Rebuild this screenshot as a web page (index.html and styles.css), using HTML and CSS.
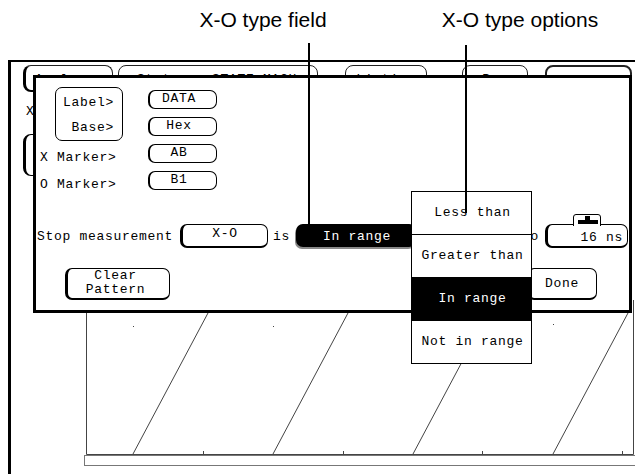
FILE: index.html
```html
<!DOCTYPE html>
<html>
<head>
<meta charset="UTF-8">
<title>X-O type options</title>
<link rel="stylesheet" href="styles.css">
</head>
<body>
<div class="figure">

  <!-- callout captions -->
  <div class="callout callout-field">X-O type field</div>
  <div class="callout callout-options">X-O type options</div>

  <!-- analyzer screen behind the dialog -->
  <div class="frame"></div>
  <div class="tabs">
    <div class="tab tab-a">Analyzer</div>
    <div class="tab tab-b"><span>State</span><span>STATE MACH</span></div>
    <div class="tab tab-c">Listing</div>
    <div class="tab tab-d">Run</div>
    <div class="tab tab-e"><i class="dot"></i></div>
  </div>
  <div class="stub"></div>
  <div class="stub-x">X</div>

  <svg class="waves" width="635" height="474" viewBox="0 0 635 474">
    <g fill="none" stroke="#444" stroke-width="1">
      <path d="M86.5 300 V454.5 H633.5 V300"/>
      <rect x="84.5" y="455.5" width="560" height="10" stroke="#777"/>
      <path d="M133 454 L208 313 M273 454 L348 313 M413 454 L488 313 M553 454 L628 313"/>
      <path d="M203.5 451 V454 M343.5 451 V454 M482.5 451 V454 M622.5 451 V454"/>
    </g>
    <g fill="#444">
      <rect x="133" y="326" width="1" height="1"/>
      <rect x="273" y="326" width="1" height="1"/>
      <rect x="553" y="324" width="1" height="1"/>
    </g>
  </svg>

  <!-- trigger dialog -->
  <div class="dialog">
    <div class="setup">
      <div class="labelbox"><span>Label&gt;</span><span>Base&gt;</span></div>
      <div class="field">DATA</div>
      <div class="field">Hex</div>
      <div class="marker">X Marker&gt;</div>
      <div class="field">AB</div>
      <div class="marker">O Marker&gt;</div>
      <div class="field">B1</div>
    </div>

    <div class="stoprow">
      <span class="words">Stop measurement</span>
      <div class="btn xo">X-O</div>
      <span class="words is">is</span>
      <div class="btn range">In range</div>
      <span class="words to">to</span>
      <div class="btn time">
        <svg class="knob" width="28" height="12" viewBox="0 0 28 12">
          <path d="M0.5 12 V3 Q0.5 0.5 3 0.5 H25 Q27.5 0.5 27.5 3 V12" fill="#fff" stroke="#000"/>
          <rect x="12" y="2" width="5" height="5" fill="#000"/>
          <rect x="5" y="6" width="20" height="4" fill="#000"/>
        </svg>
        16 ns
      </div>
    </div>

    <div class="actions">
      <div class="btn clear">Clear<br>Pattern</div>
      <div class="btn done">Done</div>
    </div>
  </div>

  <!-- open X-O type menu -->
  <ul class="menu">
    <li>Less than</li>
    <li>Greater than</li>
    <li class="picked">In range</li>
    <li>Not in range</li>
  </ul>

  <div class="leader leader-field"></div>
  <div class="leader leader-options"></div>
</div>
</body>
</html>
```

FILE: styles.css
```css
html, body{
  margin:0;
  padding:0;
  background:#fff;
}
body{
  font-family:"Liberation Mono", "DejaVu Sans Mono", monospace;
  font-size:13px;
  letter-spacing:0.7px;
  color:#000;
}
.figure{
  position:relative;
  width:635px;
  height:474px;
  overflow:hidden;
}

/* callouts */
.callout{
  position:absolute;
  top:9px;
  width:200px;
  text-align:center;
  font-family:"Liberation Sans", sans-serif;
  font-size:21px;
  line-height:22px;
  letter-spacing:0;
}
.callout-field{ left:163px; }
.callout-options{ left:420px; }
.leader{
  position:absolute;
  width:2px;
  background:#000;
  z-index:5;
}
.leader-field{ left:308px; top:43px; height:182px; }
.leader-options{ left:465px; top:45px; height:168px; }

/* screen behind */
.frame{
  position:absolute;
  left:8px;
  top:60px;
  width:640px;
  height:430px;
  border-top:2px solid #000;
  border-left:3px solid #000;
}
.tabs{
  position:absolute;
  left:23px;
  top:65px;
  display:flex;
}
.tab{
  box-sizing:border-box;
  height:27px;
  padding-top:7px;
  line-height:14px;
  text-align:center;
  border:1px solid #222;
  border-radius:8px;
  background:#fff;
}
.tab-a{ width:90px; border-left:3px solid #000; border-bottom:2px solid #000; }
.tab-b{
  width:200px;
  margin-left:5px;
  display:flex;
  justify-content:space-between;
  padding-left:18px;
  padding-right:20px;
}
.tab-c{ width:82px; margin-left:27px; }
.tab-d{ width:66px; margin-left:35px; }
.tab-e{ width:87px; margin-left:17px; border-width:2px; }
.dot{
  display:inline-block;
  width:5px;
  height:2px;
  margin-top:1px;
  background:#000;
}
.stub{
  position:absolute;
  left:23px;
  top:134px;
  width:40px;
  height:42px;
  box-sizing:border-box;
  border:1px solid #000;
  border-left-width:3px;
  border-radius:8px;
}
.stub-x{
  position:absolute;
  left:26px;
  top:105px;
  line-height:14px;
}
.waves{
  position:absolute;
  left:0;
  top:0;
}

/* dialog */
.dialog{
  position:absolute;
  left:33px;
  top:75px;
  width:599px;
  box-sizing:border-box;
  border:3px solid #000;
  background:#fff;
  padding:12px 0 10px 1px;
  z-index:2;
}
.btn{
  box-sizing:border-box;
  border:1px solid #000;
  border-left-width:3px;
  border-bottom-width:2px;
  border-radius:7px;
  background:#fff;
  line-height:14px;
  text-align:center;
}
.setup{
  margin-left:3px;
  display:grid;
  grid-template-columns:108px 69px;
  grid-auto-rows:19px;
  row-gap:8px;
}
.labelbox{
  grid-row:1 / 3;
  grid-column:1;
  box-sizing:border-box;
  margin:-3px 0 0 15px;
  width:68px;
  height:54px;
  border:1px solid #000;
  border-radius:7px;
  padding:8px 8px 0 0;
  display:flex;
  flex-direction:column;
  align-items:flex-end;
  row-gap:11px;
  line-height:14px;
}
.field{
  box-sizing:border-box;
  border:1px solid #000;
  border-left-width:2px;
  border-radius:7px;
  padding:1px 8px 0 0;
  line-height:14px;
  text-align:center;
}
.marker{
  grid-column:1;
  padding-top:7px;
  line-height:14px;
}
.stoprow{
  margin-top:34px;
  display:flex;
  align-items:flex-start;
  height:24px;
}
.words{
  padding-top:6px;
  line-height:14px;
}
.xo{
  width:88px;
  height:24px;
  margin-left:7px;
  padding-top:2px;
}
.is{ margin-left:5px; }
.range{
  width:120px;
  height:23px;
  margin-left:6px;
  padding-top:5px;
  background:#000;
  border-color:#000;
  color:#fff;
  box-shadow:-1px 2px 0 #888;
}
.to{ margin-left:auto; margin-right:6px; }
.time{
  position:relative;
  width:83px;
  height:24px;
  margin-right:1px;
  padding:6px 4px 0 0;
  text-align:right;
}
.knob{
  position:absolute;
  left:25px;
  top:-11px;
}
.actions{
  margin-top:20px;
  display:flex;
  justify-content:space-between;
}
.clear{
  width:105px;
  height:32px;
  margin-left:28px;
  padding:0 6px 0 0;
  line-height:13.5px;
}
.done{
  width:70px;
  height:32px;
  margin-right:32px;
  padding:8px 2px 0 0;
}

/* menu */
.menu{
  position:absolute;
  left:411px;
  top:191px;
  width:121px;
  margin:0;
  padding:0;
  list-style:none;
  box-sizing:border-box;
  border:1px solid #000;
  background:#fff;
  z-index:3;
}
.menu li{
  height:42px;
  line-height:42px;
  text-align:center;
  padding-left:2px;
}
.menu li + li{
  border-top:1px solid #000;
}
.menu .picked{
  background:#000;
  color:#fff;
}
```
